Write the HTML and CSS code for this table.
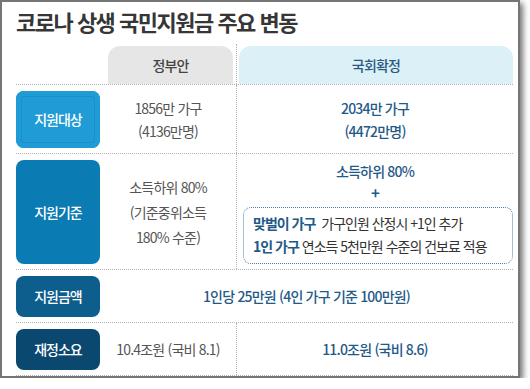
FILE: index.html
```html
<!DOCTYPE html>
<html lang="ko">
<head>
<meta charset="utf-8">
<title>코로나 상생 국민지원금 주요 변동</title>
<link rel="stylesheet" href="styles.css">
</head>
<body>
<div class="frame">
  <h1 class="title">코로나 상생 국민지원금 주요 변동</h1>
  <div class="table">
    <div class="row head">
      <div class="cell c1"></div>
      <div class="cell c2"><div class="tab tab-gov">정부안</div></div>
      <div class="cell c3"><div class="tab tab-nat">국회확정</div></div>
    </div>
    <div class="row">
      <div class="cell c1"><div class="label l1">지원대상</div></div>
      <div class="cell c2 gray">1856만 가구<br>(4136만명)</div>
      <div class="cell c3 blue">2034만 가구<br>(4472만명)</div>
    </div>
    <div class="row">
      <div class="cell c1"><div class="label l2">지원기준</div></div>
      <div class="cell c2 gray tall">소득하위 80%<br>(기준중위소득<br>180% 수준)</div>
      <div class="cell c3">
        <div class="blue line">소득하위 80%</div>
        <div class="plus">+</div>
        <div class="note">
          <div><span class="em em-wide">맞벌이 가구</span> 가구인원 산정시 +1인 추가</div>
          <div><span class="em">1인 가구</span> 연소득 5천만원 수준의 건보료 적용</div>
        </div>
      </div>
    </div>
    <div class="row">
      <div class="cell c1"><div class="label l3">지원금액</div></div>
      <div class="cell span blue">1인당 25만원 (4인 가구 기준 100만원)</div>
    </div>
    <div class="row">
      <div class="cell c1"><div class="label l4">재정소요</div></div>
      <div class="cell c2 gray">10.4조원 (국비 8.1)</div>
      <div class="cell c3 blue">11.0조원 (국비 8.6)</div>
    </div>
  </div>
</div>
</body>
</html>
```

FILE: styles.css
```css
html, body {
  margin: 0;
  padding: 0;
  background: #ffffff;
}

body {
  font-family: "Noto Sans CJK KR", "Noto Sans", sans-serif;
  color: #555555;
}

.frame {
  box-sizing: border-box;
  width: 520px;
  height: 378px;
  border: 2px solid #767676;
  box-shadow: 3px 3px 6px rgba(0, 0, 0, 0.55);
  background: #ffffff;
  padding: 4px 5px 0 14px;
}

.title {
  margin: 0 0 8px 0;
  height: 30px;
  font-size: 22px;
  line-height: 30px;
  font-weight: 700;
  letter-spacing: -1.5px;
  color: #363636;
}

.row {
  display: grid;
  grid-template-columns: 84px 136px 1fr;
  border-bottom: 1px dotted #b3b3b3;
}

.cell {
  padding: 6px 0 5px;
  display: flex;
  flex-direction: column;
  justify-content: center;
  align-items: center;
  text-align: center;
  font-size: 14px;
  line-height: 23px;
  letter-spacing: -0.8px;
}

.c3 {
  border-left: 1px dotted #b3b3b3;
}

.span {
  grid-column: 2 / 4;
}

.head .cell {
  padding: 2px 0 0;
  align-items: stretch;
}

.tab {
  height: 38px;
  display: flex;
  align-items: center;
  justify-content: center;
  border-radius: 12px 12px 0 0;
  font-size: 14px;
  letter-spacing: -0.8px;
  font-weight: 500;
}

.tab-gov {
  margin: 0 3px 0 8px;
  background: #e6e6e6;
  color: #444444;
}

.tab-nat {
  margin-left: 2px;
  background: #dcf0f8;
  color: #2b5a7e;
}

.label {
  width: 84px;
  box-sizing: border-box;
  display: flex;
  align-items: center;
  justify-content: center;
  border-radius: 8px;
  color: #ffffff;
  font-size: 14px;
  letter-spacing: -1px;
  font-weight: 500;
}

.l1 {
  height: 57px;
  background: #1f9bd6;
  box-shadow: inset 0 0 0 5px #1f9bd6, inset 0 0 0 6px rgba(0, 60, 110, 0.12);
}

.l2 {
  height: 104px;
  background: #0b7bb3;
}

.l3 {
  height: 41px;
  background: #0e5e8d;
}

.l4 {
  height: 41px;
  background: #0a4870;
}

.gray {
  color: #555555;
}

.tall {
  line-height: 25px;
}

.blue {
  color: #1f5a88;
  font-weight: 500;
}

.line {
  line-height: 21px;
}

.plus {
  color: #1f5a88;
  font-weight: 700;
  font-size: 15px;
  line-height: 22px;
}

.note {
  align-self: stretch;
  margin: 3px 0 0 6px;
  padding: 4px 9px 5px;
  border: 1px dotted #4f7fa6;
  border-radius: 8px;
  text-align: left;
  color: #333333;
  font-size: 14px;
  line-height: 23px;
  letter-spacing: -1px;
}

.em {
  color: #1f5a88;
  font-weight: 700;
}

.em-wide {
  margin-right: 3px;
}
```
